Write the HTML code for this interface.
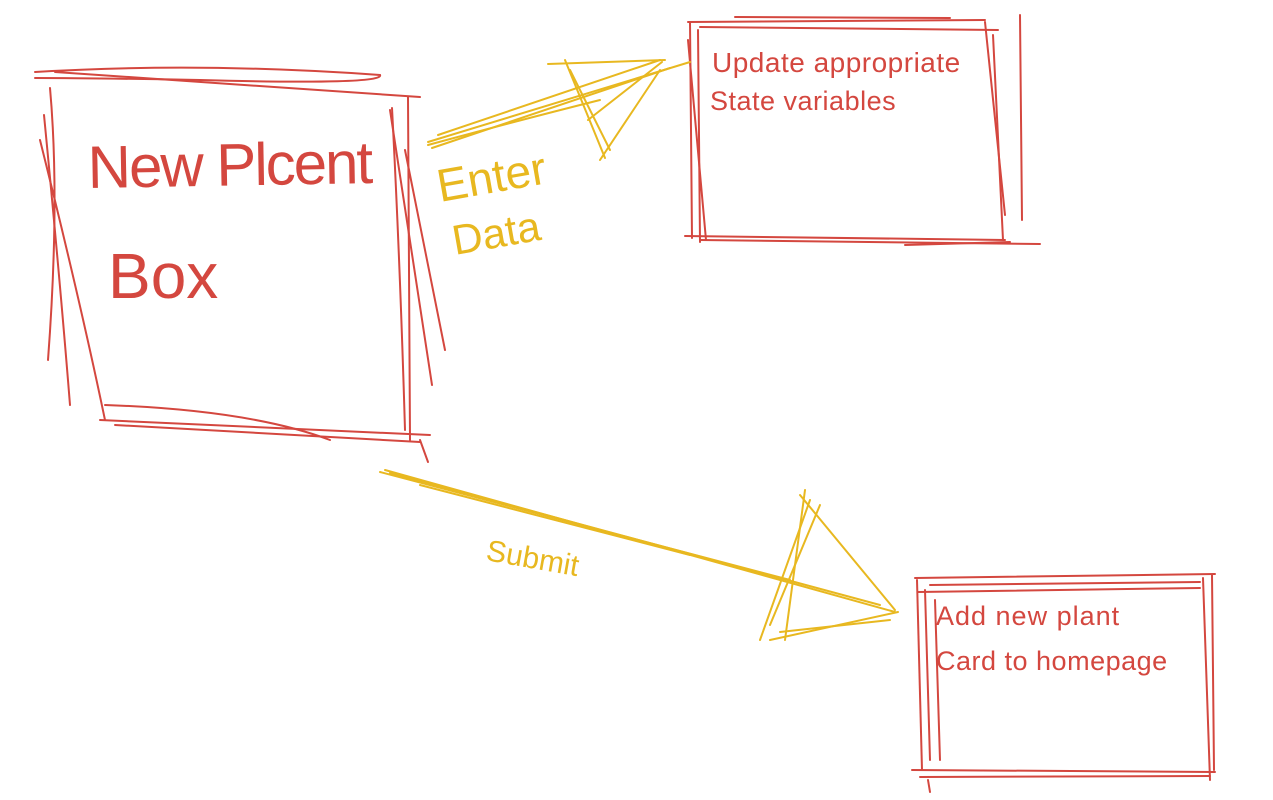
<!DOCTYPE html>
<html><head><meta charset="utf-8"><style>
html,body{margin:0;padding:0;background:#fff;width:1273px;height:800px;overflow:hidden}
svg{display:block}
text{font-family:"Liberation Sans",sans-serif;font-weight:normal}
</style></head><body>
<svg width="1273" height="800" viewBox="0 0 1273 800" xmlns="http://www.w3.org/2000/svg">
<g fill="none" stroke="#d4473f" stroke-width="2" stroke-linecap="round">
<path d="M35 72 Q200 62 380 75 Q385 85 200 80 Q90 78 35 78"/>
<path d="M55 72 L420 97"/>
<path d="M50 88 Q60 200 48 360"/>
<path d="M44 115 Q60 280 70 405"/>
<path d="M40 140 Q80 300 105 420"/>
<path d="M408 97 L410 440"/>
<path d="M392 108 Q400 260 405 430"/>
<path d="M390 110 L432 385"/>
<path d="M405 150 L445 350"/>
<path d="M105 405 Q250 410 330 440"/>
<path d="M100 420 L430 435"/>
<path d="M115 425 L420 442"/>
<path d="M420 440 L428 462"/>
<path d="M688 22 L985 20"/><path d="M700 27 L998 30"/><path d="M735 17 L950 18"/>
<path d="M690 22 L692 238"/><path d="M698 30 L700 242"/><path d="M688 40 L706 240"/>
<path d="M985 22 L1005 215"/><path d="M993 35 L1003 240"/><path d="M1020 15 L1022 220"/>
<path d="M685 236 L1005 240"/><path d="M700 240 L1040 244"/><path d="M905 245 L1010 242"/>
<path d="M915 578 L1215 574"/><path d="M930 585 L1200 582"/><path d="M918 592 L1200 588"/>
<path d="M917 580 L922 770"/><path d="M925 590 L930 760"/><path d="M935 600 L940 760"/>
<path d="M1203 578 L1210 780"/><path d="M1212 575 L1214 770"/>
<path d="M912 770 L1215 772"/><path d="M920 777 L1210 776"/><path d="M928 780 L930 792"/>
</g>
<g fill="none" stroke="#e8b820" stroke-width="2" stroke-linecap="round">
<path d="M428 142 L690 62"/><path d="M432 148 L670 68"/><path d="M438 135 L660 60"/><path d="M428 145 Q520 120 600 100"/>
<path d="M548 64 L665 60"/><path d="M565 60 L605 158"/><path d="M660 70 L600 160"/><path d="M570 70 L610 150"/><path d="M662 62 L588 120"/>
<path d="M385 470 L895 612"/><path d="M390 473 L880 605"/><path d="M420 485 L690 555"/><path d="M380 472 L790 580"/>
<path d="M800 495 L895 610"/><path d="M805 490 L785 640"/><path d="M820 505 L770 625"/><path d="M898 612 L770 640"/><path d="M810 500 L760 640"/><path d="M890 620 L780 632"/>
</g>
<g fill="#d4473f">
<text x="88" y="188" font-size="60" letter-spacing="-2" transform="rotate(-1 88 188)">New Plcent</text>
<text x="108" y="298" font-size="64">Box</text>
<text x="712" y="72" font-size="28" letter-spacing="0.5">Update appropriate</text>
<text x="710" y="110" font-size="27" letter-spacing="0.5">State variables</text>
<text x="936" y="625" font-size="27" letter-spacing="1">Add new plant</text>
<text x="936" y="670" font-size="27" letter-spacing="0.5">Card  to homepage</text>
</g>
<g fill="#e8b820">
<text x="440" y="202" font-size="46" transform="rotate(-10 440 202)">Enter</text>
<text x="455" y="255" font-size="42" transform="rotate(-10 455 255)">Data</text>
<text x="485" y="560" font-size="30" transform="rotate(10 485 560)">Submit</text>
</g>
</svg>
</body></html>
